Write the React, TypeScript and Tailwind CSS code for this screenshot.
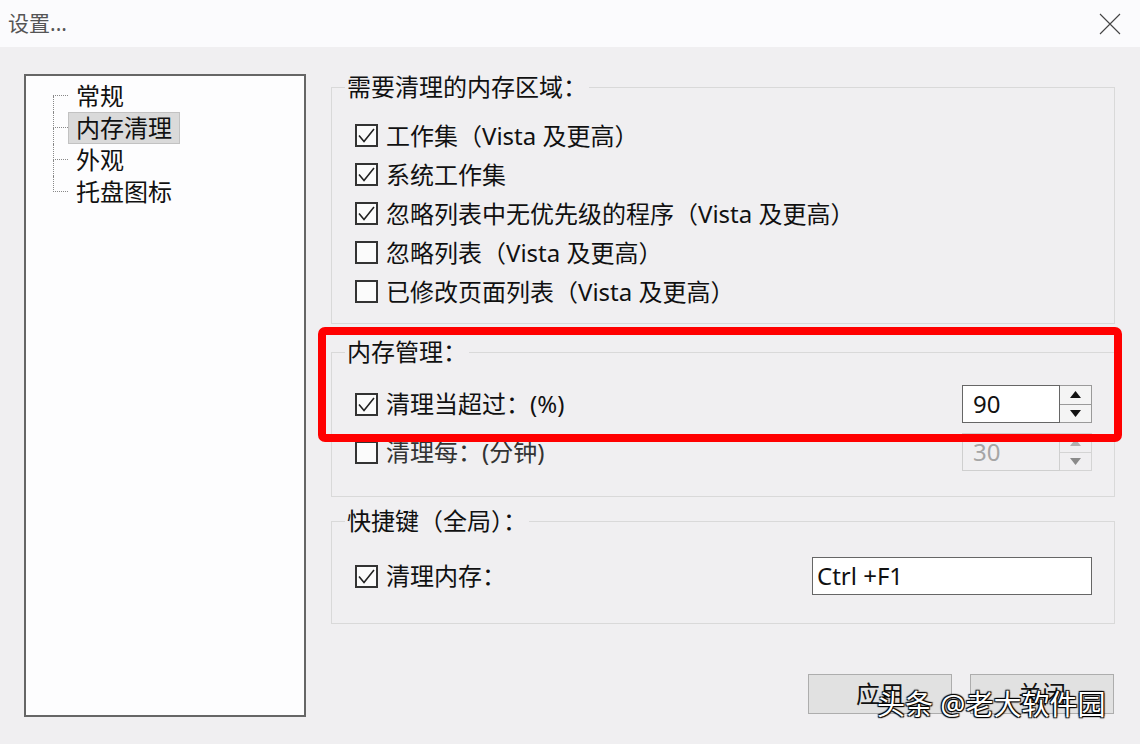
import React from "react";

const Check = ({ checked }: { checked?: boolean }) => (
  <span className="w-[23px] h-[23px] border-2 border-[#333] bg-[#fbfbfb] flex items-center justify-center shrink-0">
    {checked && (
      <svg width="19" height="19" viewBox="0 0 19 19">
        <path d="M2 9.5 L7 15.5 L17 3" fill="none" stroke="#222" strokeWidth="1.6" />
      </svg>
    )}
  </span>
);

const CheckRow = ({ label, checked }: { label: string; checked?: boolean }) => (
  <div className="flex items-center h-[39px] gap-[8px]">
    <Check checked={checked} />
    <span className="leading-[32px] whitespace-nowrap">{label}</span>
  </div>
);

const Arrow = ({ up, color }: { up?: boolean; color: string }) => (
  <svg width="11" height="7" viewBox="0 0 11 7">
    <path d={up ? "M5.5 0 L11 7 L0 7 Z" : "M0 0 L11 0 L5.5 7 Z"} fill={color} />
  </svg>
);

const Spinner = ({ value, disabled }: { value: string; disabled?: boolean }) => (
  <div className="flex h-[38px]">
    <div
      className={`w-[98px] border pl-[10px] flex items-center leading-none ${
        disabled ? "border-[#cfcfcf] bg-[#f0eff1] text-[#a5a5a5]" : "border-[#666] bg-white text-[#111]"
      }`}
    >
      {value}
    </div>
    <div
      className={`w-[32px] border border-l-0 flex flex-col ${
        disabled ? "border-[#d4d4d4] bg-[#f0eff1]" : "border-[#9a9a9a] bg-[#f4f4f4]"
      }`}
    >
      <div className="flex-1 flex items-center justify-center">
        <Arrow up color={disabled ? "#b0b0b0" : "#111"} />
      </div>
      <div className={`flex-1 flex items-center justify-center border-t ${disabled ? "border-[#d4d4d4]" : "border-[#9a9a9a]"}`}>
        <Arrow color={disabled ? "#8a8a8a" : "#111"} />
      </div>
    </div>
  </div>
);

const treeItems = ["常规", "内存清理", "外观", "托盘图标"];

export default function App() {
  return (
    <div className="relative w-[1140px] h-[744px] bg-[#f0eff1] flex flex-col font-['Noto_Sans','Noto_Sans_CJK_SC',sans-serif] text-[24px] text-[#111] overflow-hidden">
      {/* title bar */}
      <div className="h-[47px] bg-[#fbfbfd] flex items-center justify-between pl-[8px] pr-[19px] shrink-0">
        <span className="text-[21px] text-[#555] leading-none">设置...</span>
        <svg width="22" height="22" viewBox="0 0 22 22">
          <path d="M1 1 L21 21 M21 1 L1 21" stroke="#444" strokeWidth="1.1" />
        </svg>
      </div>

      {/* body */}
      <div className="flex flex-1">
        <div className="ml-[24px] mt-[27px] w-[282px] h-[643px] bg-[#fdfdfe] border-2 border-[#666] pt-[4px]">
          {treeItems.map((t, i) => (
            <div key={t} className="flex h-[32px]">
              <div className="ml-[27px] w-[15px] flex flex-col">
                <div
                  className={`h-[16px] border-b border-dotted border-b-[#888] ${
                    i > 0 ? "border-l border-l-[#888]" : ""
                  }`}
                />
                <div className={`h-[16px] ${i < treeItems.length - 1 ? "border-l border-dotted border-l-[#888]" : ""}`} />
              </div>
              <span
                className={`h-[32px] px-[7px] leading-[30px] border ${
                  i === 1 ? "bg-[#dadada] border-[#c2c2c2]" : "border-transparent"
                }`}
              >
                {t}
              </span>
            </div>
          ))}
        </div>

        <div className="ml-[25px] mt-[24px] w-[784px] flex flex-col">
          <fieldset className="border border-[#d9d9d9] pl-[13px] pr-[22px] pt-[13px] pb-[12px]">
            <legend className="px-[2px] leading-[32px]">需要清理的内存区域：</legend>
            <div className="pl-[10px]">
              <CheckRow checked label="工作集（Vista 及更高）" />
              <CheckRow checked label="系统工作集" />
              <CheckRow checked label="忽略列表中无优先级的程序（Vista 及更高）" />
              <CheckRow label="忽略列表（Vista 及更高）" />
              <CheckRow label="已修改页面列表（Vista 及更高）" />
            </div>
          </fieldset>

          <fieldset className="mt-[12px] border border-[#d9d9d9] pl-[13px] pr-[22px] pt-[12px] pb-[20px]">
            <legend className="px-[2px] leading-[32px]">内存管理：</legend>
            <div className="pl-[10px]">
              <div className="flex items-center justify-between h-[48px]">
                <div className="flex items-center gap-[8px]">
                  <Check checked />
                  <span className="leading-[32px]">清理当超过：(%)</span>
                </div>
                <Spinner value="90" />
              </div>
              <div className="flex items-center justify-between h-[48px]">
                <div className="flex items-center gap-[8px] text-[#333]">
                  <Check />
                  <span className="leading-[32px]">清理每：(分钟)</span>
                </div>
                <Spinner value="30" disabled />
              </div>
            </div>
          </fieldset>

          <fieldset className="mt-[8px] border border-[#d9d9d9] pl-[13px] pr-[22px] pt-[15px] pb-[23px]">
            <legend className="px-[2px] leading-[32px]">快捷键（全局）：</legend>
            <div className="pl-[10px] flex items-center justify-between h-[48px]">
              <div className="flex items-center gap-[8px]">
                <Check checked />
                <span className="leading-[32px]">清理内存：</span>
              </div>
              <div className="w-[280px] h-[38px] border border-[#666] bg-white pl-[4px] flex items-center leading-none">
                Ctrl +F1
              </div>
            </div>
          </fieldset>

          <div className="mt-[50px] flex justify-end gap-[18px] pr-[1px]">
            <button className="w-[144px] h-[40px] bg-[#e1e1e1] border border-[#adadad] leading-none">应用</button>
            <button className="w-[144px] h-[40px] bg-[#e1e1e1] border border-[#adadad] leading-none">关闭</button>
          </div>
        </div>
      </div>

      {/* red highlight */}
      <div className="absolute left-[318px] top-[327px] w-[804px] h-[115px] border-[8px] border-[#ff0000] rounded-[7px]" />

      {/* watermark */}
      <div className="absolute left-[877px] top-[690px] text-[28px] leading-none text-white whitespace-nowrap [text-shadow:1px_1px_1px_#000,-1px_-1px_1px_#000,1px_-1px_1px_#000,-1px_1px_1px_#000]">
        头条 @老大软件园
      </div>
    </div>
  );
}
